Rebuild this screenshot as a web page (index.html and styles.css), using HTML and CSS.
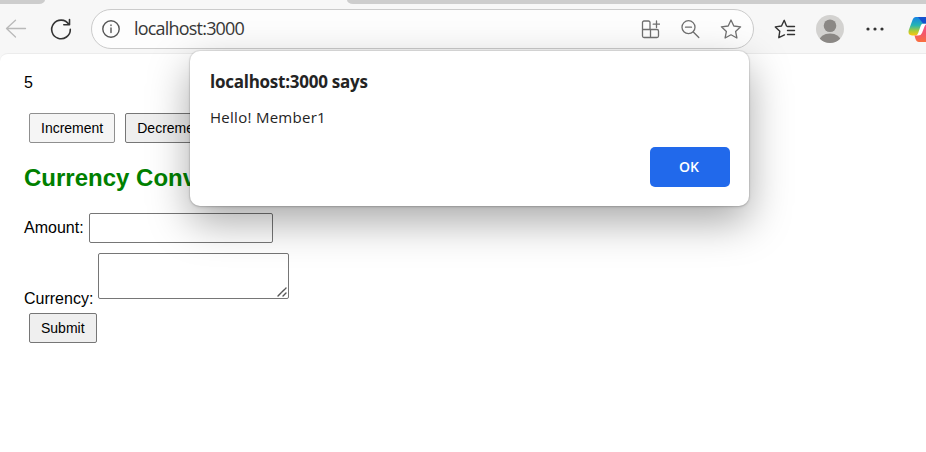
FILE: index.html
```html
<!DOCTYPE html>
<html lang="en">
<head>
<meta charset="utf-8">
<title>localhost:3000</title>
<link rel="stylesheet" href="styles.css">
</head>
<body>
<header class="browser">
  <div class="tabs"><span class="tab tab-left"></span><span class="tab tab-right"></span></div>
  <div class="toolbar">
    <svg class="back" width="22" height="22" viewBox="0 0 22 22"><path d="M20.500 10.500H1.500M10.500 2.200 1.500 10.500l9 8.500"/></svg>
    <svg class="reload" width="24" height="24" viewBox="0 0 24 24"><path d="M19.800 7.400A9.300 9.300 0 1 0 21.300 12.400M20.500 2.600V7.800H14.800"/></svg>
    <div class="address">
      <svg class="info" width="20" height="20" viewBox="0 0 20 20"><circle cx="10" cy="10" r="8.200"/><path d="M10 9v4.500M10 6v.6"/></svg>
      <span class="url">localhost:3000</span>
      <svg class="icon apps" width="20" height="20" viewBox="0 0 20 20"><path d="M10 10.500V3.500a1.500 1.500 0 0 0-1.500-1.500H4a1.500 1.500 0 0 0-1.500 1.500V17A1.500 1.500 0 0 0 4 18.500H17A1.500 1.500 0 0 0 18.500 17V12a1.500 1.500 0 0 0-1.500-1.500H2.500M10.500 10.500v8M16.500 2v6.500M13.200 5.200h6.600"/></svg>
      <svg class="icon zoom" width="20" height="20" viewBox="0 0 20 20"><circle cx="8.500" cy="8.200" r="6.500"/><path d="M5.500 8.200h6M13.300 13l5.500 5.500"/></svg>
      <svg class="icon star" width="22" height="22" viewBox="0 0 22 22"><path d="m11 2 2.800 6 6.800.8-5 4.600 1.300 6.600-5.900-3.200L5.100 20l1.300-6.600-5-4.600L8.200 8Z"/></svg>
    </div>
    <svg class="favorites" width="22" height="22" viewBox="0 0 22 22"><path d="m12.500 8-2.300-5.700L7.500 8l-6.200.9 4.500 4.300-1 6.500 5.700-2.800M13.500 8.500h7M13.500 12.500h7M13.500 16.500h7"/></svg>
    <svg class="avatar" width="28" height="28" viewBox="0 0 28 28"><defs><clipPath id="round"><circle cx="14" cy="14" r="14"/></clipPath></defs><g clip-path="url(#round)"><path class="avatar-bg" d="M0 0h28v28H0z"/><circle cx="14" cy="10.700" r="6.300"/><ellipse cx="14" cy="26.500" rx="11" ry="8"/></g></svg>
    <svg class="more" width="18" height="6" viewBox="0 0 18 6"><circle cx="2" cy="3" r="1.600"/><circle cx="9" cy="3" r="1.600"/><circle cx="16" cy="3" r="1.600"/></svg>
    <svg class="copilot" width="28" height="28" viewBox="0 0 28 28">
      <defs>
        <linearGradient id="cool" x1="0" y1="0" x2="0" y2="1"><stop offset="0" stop-color="#1682e6"/><stop offset=".45" stop-color="#25b5b3"/><stop offset=".75" stop-color="#a9cb37"/><stop offset="1" stop-color="#ffc50c"/></linearGradient>
        <linearGradient id="warm" x1="0" y1="0" x2="0" y2="1"><stop offset="0" stop-color="#f4568d"/><stop offset=".5" stop-color="#f4566d"/><stop offset="1" stop-color="#f9703f"/></linearGradient>
      </defs>
      <path fill="#fff" d="M13 7h9l-5 15H8z"/>
      <path fill="url(#cool)" d="M8 2h13l-3 6.500h-2.500q-2 0-2.700 2l-2.600 7.500q-.8 2.500-3 2.500H4Q-.5 20 .8 15L4.500 5Q5.500 2 8 2"/>
      <path fill="#1551ce" d="M10 2h12l-3 6.500h-4z"/>
      <path fill="url(#warm)" d="M20 9h5q5 0 4 5l-3 9q-1 4-5 4H11q-2.500 0-3.500-3L6.500 20.500H10q3 0 4-2.500l2.500-6.500q1-2.500 3.500-2.500"/>
    </svg>
  </div>
</header>
<main class="page">
  <div class="count">5</div>
  <div class="actions"><button class="btn btn-hover">Increment</button><button class="btn">Decrement</button></div>
  <h1 class="title">Currency Convertor</h1>
  <form>
    <div class="row amount"><label for="amount">Amount:</label><input class="field" id="amount"></div>
    <div class="row currency"><label for="currency">Currency:</label><div class="area-wrap"><textarea class="area" id="currency"></textarea><svg class="grip" width="10" height="10" viewBox="0 0 10 10"><path d="M1 9 9 1M6 9l3-3"/></svg></div></div>
    <button class="btn submit" type="button">Submit</button>
  </form>
</main>
<section class="dialog" role="alertdialog">
  <h2 class="dialog-title">localhost:3000 says</h2>
  <p class="dialog-text">Hello! Member1</p>
  <button class="ok">OK</button>
</section>
</body>
</html>
```
FILE: styles.css
```css
* { box-sizing: border-box; }
body { margin: 0; width: 926px; height: 452px; overflow: hidden; position: relative; background: #f7f7f7; font-family: "Liberation Sans", Arial, sans-serif; }
svg { flex: none; display: block; fill: none; stroke-linecap: round; stroke-linejoin: round; }
.browser { height: 53px; overflow: hidden; }
.tabs { display: flex; justify-content: space-between; height: 4px; }
.tab { background: #cdcdcd; }
.tab-left { width: 45px; border-bottom-right-radius: 6px 4px; }
.tab-right { width: 579px; border-bottom-left-radius: 6px 4px; }
.toolbar { display: flex; align-items: center; height: 49px; }
.back { margin-left: 5px; stroke: #b9b9b9; stroke-width: 1.3; }
.reload { margin-left: 22px; stroke: #333; stroke-width: 1.6; }
.address { flex: none; display: flex; align-items: center; width: 663px; height: 40px; margin-left: 18px; padding: 0 11px 0 9px; border: 1px solid #cbcbcb; border-radius: 20px; background: #fdfdfd; }
.info { stroke: #555; stroke-width: 1.4; }
.url { flex: 1; margin: -1px 0 0 13px; color: #383838; font: 18px/24px "Open Sans", sans-serif; letter-spacing: -.8px; }
.icon { stroke: #707070; stroke-width: 1.3; }
.zoom { margin-left: 20px; }
.star { margin-left: 20px; }
.favorites { margin-left: 20px; stroke: #333; stroke-width: 1.4; }
.avatar { margin-left: 20px; fill: #8b8885; }
.avatar-bg { fill: #d3d2d0; }
.more { margin-left: 22px; fill: #333; }
.copilot { margin-left: 24px; }
.page { height: 399px; padding: 20px 24px; background: #fff; border-top: 1px solid #ececec; border-top-left-radius: 8px; font-size: 16px; color: #000; }
.count { line-height: 18px; }
.actions { display: flex; gap: 10px; margin: 21px 0 0 5px; }
.btn { height: 30px; padding: 0 11px; border: 1px solid #767676; border-radius: 2px; background: #efefef; color: #000; font: 14px "Liberation Sans", Arial, sans-serif; }
.btn-hover { background: #f5f5f5; border-color: #8f8f8f; }
.title { margin: 21px 0 0; color: green; font-size: 24px; line-height: 28px; white-space: nowrap; }
.row { display: flex; }
.amount { align-items: center; margin-top: 21px; gap: 5px; }
.currency { align-items: flex-end; margin-top: 10px; gap: 5px; line-height: 18px; }
.currency label { margin-bottom: -9px; }
.field { width: 184px; height: 30px; border: 1px solid #767676; border-radius: 2px; background: transparent; }
.area-wrap { position: relative; width: 191px; height: 46px; }
.area { display: block; width: 191px; height: 46px; border: 1px solid #767676; border-radius: 2px; background: transparent; resize: none; }
.grip { position: absolute; right: 2px; bottom: 2px; stroke: #555; stroke-width: 1.4; stroke-dasharray: 4.500 1; }
.submit { margin: 14px 0 0 5px; }
.dialog { position: absolute; left: 190px; top: 51px; width: 559px; height: 155px; padding: 19px 19px 19px 20px; display: flex; flex-direction: column; border-radius: 10px; background: #fff; box-shadow: 0 0 0 1px rgba(0,0,0,.06), 0 1px 3px rgba(0,0,0,.16), 0 16px 42px rgba(0,0,0,.34); font-family: "Open Sans", sans-serif; color: #242424; }
.dialog-title { margin: 0; font-size: 17px; line-height: 24px; font-weight: 700; letter-spacing: -.25px; }
.dialog-text { margin: 13px 0 0; font-size: 15px; line-height: 20px; letter-spacing: .28px; }
.ok { align-self: flex-end; margin-top: auto; width: 80px; height: 40px; padding: 0 2px 2px 0; border: 0; border-radius: 5px; background: #2169eb; color: #fff; font: 600 14px "Open Sans", sans-serif; }
```
